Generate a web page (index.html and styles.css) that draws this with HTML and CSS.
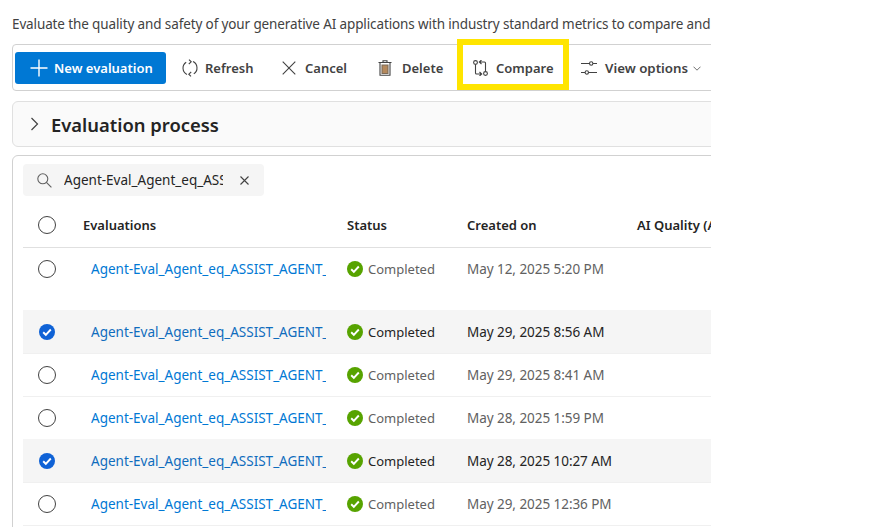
FILE: index.html
```html
<!DOCTYPE html>
<html lang="en">
<head>
    <meta charset="UTF-8">
    <meta name="viewport" content="width=device-width, initial-scale=1.0">
    <title>Evaluations</title>
    <link rel="stylesheet" href="styles.css">
</head>
<body>
    <div class="page">
        <p class="intro">Evaluate the quality and safety of your generative AI applications with industry standard metrics to compare and choose the best one</p>

        <div class="toolbar">
            <button class="btn-primary">
                <svg width="20" height="20" viewBox="0 0 20 20"><path d="M10 1.5v17M1.5 10h17" stroke="#fff" stroke-width="1.4" fill="none"/></svg>
                New evaluation
            </button>
            <button class="tool tool-refresh">
                <svg width="18" height="18" viewBox="0 0 18 18" fill="none" stroke="#424242" stroke-width="1.1"><path d="M5.2 3.2A7 7 0 0 0 6 15.4M12.8 14.8A7 7 0 0 0 12 2.6"/><path d="M8 .6 10.2 2.8 7.8 5M10 17.4 7.8 15.2l2.4-2.2"/></svg>
                Refresh
            </button>
            <button class="tool tool-cancel">
                <svg width="14" height="14" viewBox="0 0 14 14" fill="none" stroke="#424242" stroke-width="1.1"><path d="M.7.7l12.6 12.6M13.3.7.7 13.3"/></svg>
                Cancel
            </button>
            <button class="tool tool-delete">
                <svg width="14" height="16" viewBox="0 0 14 16" fill="none" stroke="#424242" stroke-width="1.1"><path d="M5 2V.8h4V2M.5 2.5h13M2 2.5v12.7h10V2.5"/><path d="M4 5v8.5h6V5z" fill="#b5895c" stroke="#7a6a58"/></svg>
                Delete
            </button>
            <button class="tool tool-compare">
                <span class="highlight"></span>
                <svg width="15" height="16" viewBox="0 0 15 16" fill="none" stroke="#424242" stroke-width="1.1"><circle cx="2.5" cy="2.5" r="1.9"/><circle cx="12.5" cy="13.5" r="1.9"/><path d="M2.5 4.5v8.5c0 .6.4 1 1 1h5M6.5 12l2.2 2-2.2 2M12.5 11.5V3c0-.6-.4-1-1-1h-5M8.5 0 6.3 2l2.2 2"/></svg>
                Compare
            </button>
            <button class="tool tool-view">
                <svg width="16" height="14" viewBox="0 0 16 14" fill="none" stroke="#424242" stroke-width="1.1"><path d="M0 2.5h8.5M12 2.5h4M0 11.5h4M7.5 11.5H16"/><circle cx="10.2" cy="2.5" r="1.7"/><circle cx="5.8" cy="11.5" r="1.7"/></svg>
                View options
                <svg class="caret" width="8" height="5" viewBox="0 0 8 5" fill="none" stroke="#707070"><path d="M.5.7 4 4.2 7.5.7"/></svg>
            </button>
        </div>

        <div class="process">
            <svg width="9" height="14" viewBox="0 0 9 14" fill="none" stroke="#424242" stroke-width="1.2"><path d="M1.5 1 7.5 7l-6 6"/></svg>
            <h2>Evaluation process</h2>
        </div>

        <div class="list-card">
            <div class="search">
                <svg width="15" height="15" viewBox="0 0 15 15" fill="none" stroke="#616161" stroke-width="1.1"><circle cx="5.8" cy="5.8" r="5"/><path d="M9.4 9.4l5 5"/></svg>
                <span class="search-text">Agent-Eval_Agent_eq_ASSIST_AGENT</span>
                <svg width="9" height="9" viewBox="0 0 9 9" fill="none" stroke="#424242" stroke-width="1.1"><path d="M.5.5l8 8M8.5.5l-8 8"/></svg>
            </div>

            <div class="row head">
                <span class="radio"></span>
                <span>Evaluations</span>
                <span>Status</span>
                <span>Created on</span>
                <span class="ai-col">AI Quality (AI)</span>
            </div>

            <div class="row first">
                <span class="radio"></span>
                <a class="name">Agent-Eval_Agent_eq_ASSIST_AGENT_1</a>
                <span class="status"><svg class="ok" width="16" height="16" viewBox="0 0 16 16"><circle cx="8" cy="8" r="8" fill="#57a300"/><path d="M4.2 8.3l2.6 2.5 5-5.3" fill="none" stroke="#fff" stroke-width="1.9"/></svg>Completed</span>
                <span class="date">May 12, 2025 5:20 PM</span>
            </div>
            <div class="row selected">
                <span class="tick"><svg width="16" height="16" viewBox="0 0 16 16"><circle cx="8" cy="8" r="8" fill="#0f62d6"/><path d="M4.2 8.3l2.6 2.5 5-5.3" fill="none" stroke="#fff" stroke-width="1.9"/></svg></span>
                <a class="name">Agent-Eval_Agent_eq_ASSIST_AGENT_3</a>
                <span class="status"><svg class="ok" width="16" height="16" viewBox="0 0 16 16"><circle cx="8" cy="8" r="8" fill="#57a300"/><path d="M4.2 8.3l2.6 2.5 5-5.3" fill="none" stroke="#fff" stroke-width="1.9"/></svg>Completed</span>
                <span class="date">May 29, 2025 8:56 AM</span>
            </div>
            <div class="row">
                <span class="radio"></span>
                <a class="name">Agent-Eval_Agent_eq_ASSIST_AGENT_3</a>
                <span class="status"><svg class="ok" width="16" height="16" viewBox="0 0 16 16"><circle cx="8" cy="8" r="8" fill="#57a300"/><path d="M4.2 8.3l2.6 2.5 5-5.3" fill="none" stroke="#fff" stroke-width="1.9"/></svg>Completed</span>
                <span class="date">May 29, 2025 8:41 AM</span>
            </div>
            <div class="row">
                <span class="radio"></span>
                <a class="name">Agent-Eval_Agent_eq_ASSIST_AGENT_3</a>
                <span class="status"><svg class="ok" width="16" height="16" viewBox="0 0 16 16"><circle cx="8" cy="8" r="8" fill="#57a300"/><path d="M4.2 8.3l2.6 2.5 5-5.3" fill="none" stroke="#fff" stroke-width="1.9"/></svg>Completed</span>
                <span class="date">May 28, 2025 1:59 PM</span>
            </div>
            <div class="row selected">
                <span class="tick"><svg width="16" height="16" viewBox="0 0 16 16"><circle cx="8" cy="8" r="8" fill="#0f62d6"/><path d="M4.2 8.3l2.6 2.5 5-5.3" fill="none" stroke="#fff" stroke-width="1.9"/></svg></span>
                <a class="name">Agent-Eval_Agent_eq_ASSIST_AGENT_3</a>
                <span class="status"><svg class="ok" width="16" height="16" viewBox="0 0 16 16"><circle cx="8" cy="8" r="8" fill="#57a300"/><path d="M4.2 8.3l2.6 2.5 5-5.3" fill="none" stroke="#fff" stroke-width="1.9"/></svg>Completed</span>
                <span class="date">May 28, 2025 10:27 AM</span>
            </div>
            <div class="row">
                <span class="radio"></span>
                <a class="name">Agent-Eval_Agent_eq_ASSIST_AGENT_3</a>
                <span class="status"><svg class="ok" width="16" height="16" viewBox="0 0 16 16"><circle cx="8" cy="8" r="8" fill="#57a300"/><path d="M4.2 8.3l2.6 2.5 5-5.3" fill="none" stroke="#fff" stroke-width="1.9"/></svg>Completed</span>
                <span class="date">May 29, 2025 12:36 PM</span>
            </div>
            <div class="row-end"></div>
        </div>
    </div>
</body>
</html>
```

FILE: styles.css
```css
body {
    font-family: "Noto Sans", "Open Sans", Arial, sans-serif;
    font-size: 13.5px;
    color: #242424;
    margin: 0;
    padding: 0;
    background-color: #fff;
}
svg {
    flex-shrink: 0;
}
.page {
    width: 699px;
    height: 527px;
    padding-left: 12px;
    overflow: hidden;
}
.intro {
    margin: 0;
    padding-top: 14px;
    height: 44px;
    box-sizing: border-box;
    line-height: 20px;
    letter-spacing: -0.12px;
    white-space: nowrap;
    color: #424242;
}
.toolbar {
    display: flex;
    align-items: flex-start;
    width: 800px;
    height: 47px;
    box-sizing: border-box;
    padding: 7px 0 0 2px;
    border: 1px solid #d1d1d1;
    border-radius: 4px;
}
button {
    display: flex;
    align-items: center;
    flex-shrink: 0;
    height: 32px;
    border: none;
    padding: 0;
    background: none;
    font-family: inherit;
    font-size: 13px;
    font-weight: 600;
    color: #424242;
    white-space: nowrap;
}
.btn-primary {
    width: 151px;
    padding-left: 14px;
    gap: 5px;
    background-color: #0078d4;
    color: #fff;
    border-radius: 3px;
}
.tool {
    position: relative;
    padding-left: 15px;
}
.tool-refresh { width: 101px; gap: 6px; }
.tool-cancel { width: 96px; gap: 9px; }
.tool-delete { width: 95px; gap: 10px; }
.tool-compare { width: 108px; gap: 8px; }
.tool-view { width: 150px; gap: 8px; font-size: 13.3px; }
.caret {
    margin-left: -3px;
}
.highlight {
    position: absolute;
    left: -1px;
    top: -13px;
    width: 100px;
    height: 39px;
    border: 6px solid #ffe500;
}
.process {
    display: flex;
    align-items: center;
    gap: 12px;
    width: 800px;
    height: 46px;
    box-sizing: border-box;
    margin-top: 10px;
    padding-left: 17px;
    background-color: #fafafa;
    border: 1px solid #e0e0e0;
    border-radius: 6px;
}
.process h2 {
    margin: 0;
    font-size: 18.4px;
    font-weight: 600;
}
.list-card {
    width: 800px;
    height: 420px;
    box-sizing: border-box;
    margin-top: 8px;
    padding: 8px 0 0 10px;
    border: 1px solid #d1d1d1;
    border-radius: 6px;
}
.search {
    display: flex;
    align-items: center;
    width: 241px;
    height: 32px;
    box-sizing: border-box;
    padding-left: 14px;
    background-color: #f5f5f5;
    border-radius: 4px;
}
.search-text {
    width: 159px;
    margin: 0 17px 0 12px;
    overflow: hidden;
    white-space: nowrap;
}
.row {
    display: grid;
    grid-template-columns: 60px 264px 120px 170px 1fr;
    align-items: center;
    height: 43px;
    box-sizing: border-box;
    border-top: 1px solid #f0f0f0;
    color: #616161;
}
.head {
    height: 46px;
    margin-top: 6px;
    border-top: none;
    border-bottom: 1px solid #e0e0e0;
    font-size: 13px;
    font-weight: 600;
    color: #242424;
}
.first {
    height: 62px;
    align-items: start;
    padding-top: 12px;
    line-height: 18px;
    border-top: none;
}
.selected {
    background-color: #f5f5f5;
    color: #242424;
    border-top: none;
}
.row-end {
    border-top: 1px solid #f0f0f0;
}
.radio {
    display: block;
    width: 18px;
    height: 18px;
    box-sizing: border-box;
    margin-left: 15px;
    border: 1px solid #424242;
    border-radius: 50%;
}
.tick {
    display: flex;
    margin-left: 16px;
}
.name {
    display: block;
    width: 235px;
    margin-left: 8px;
    overflow: hidden;
    white-space: nowrap;
    color: #0078d4;
}
.selected .name {
    color: #0f6cbd;
}
.status {
    display: flex;
    align-items: center;
    gap: 5px;
    font-size: 13px;
}
.date {
    letter-spacing: -0.05px;
}
```
